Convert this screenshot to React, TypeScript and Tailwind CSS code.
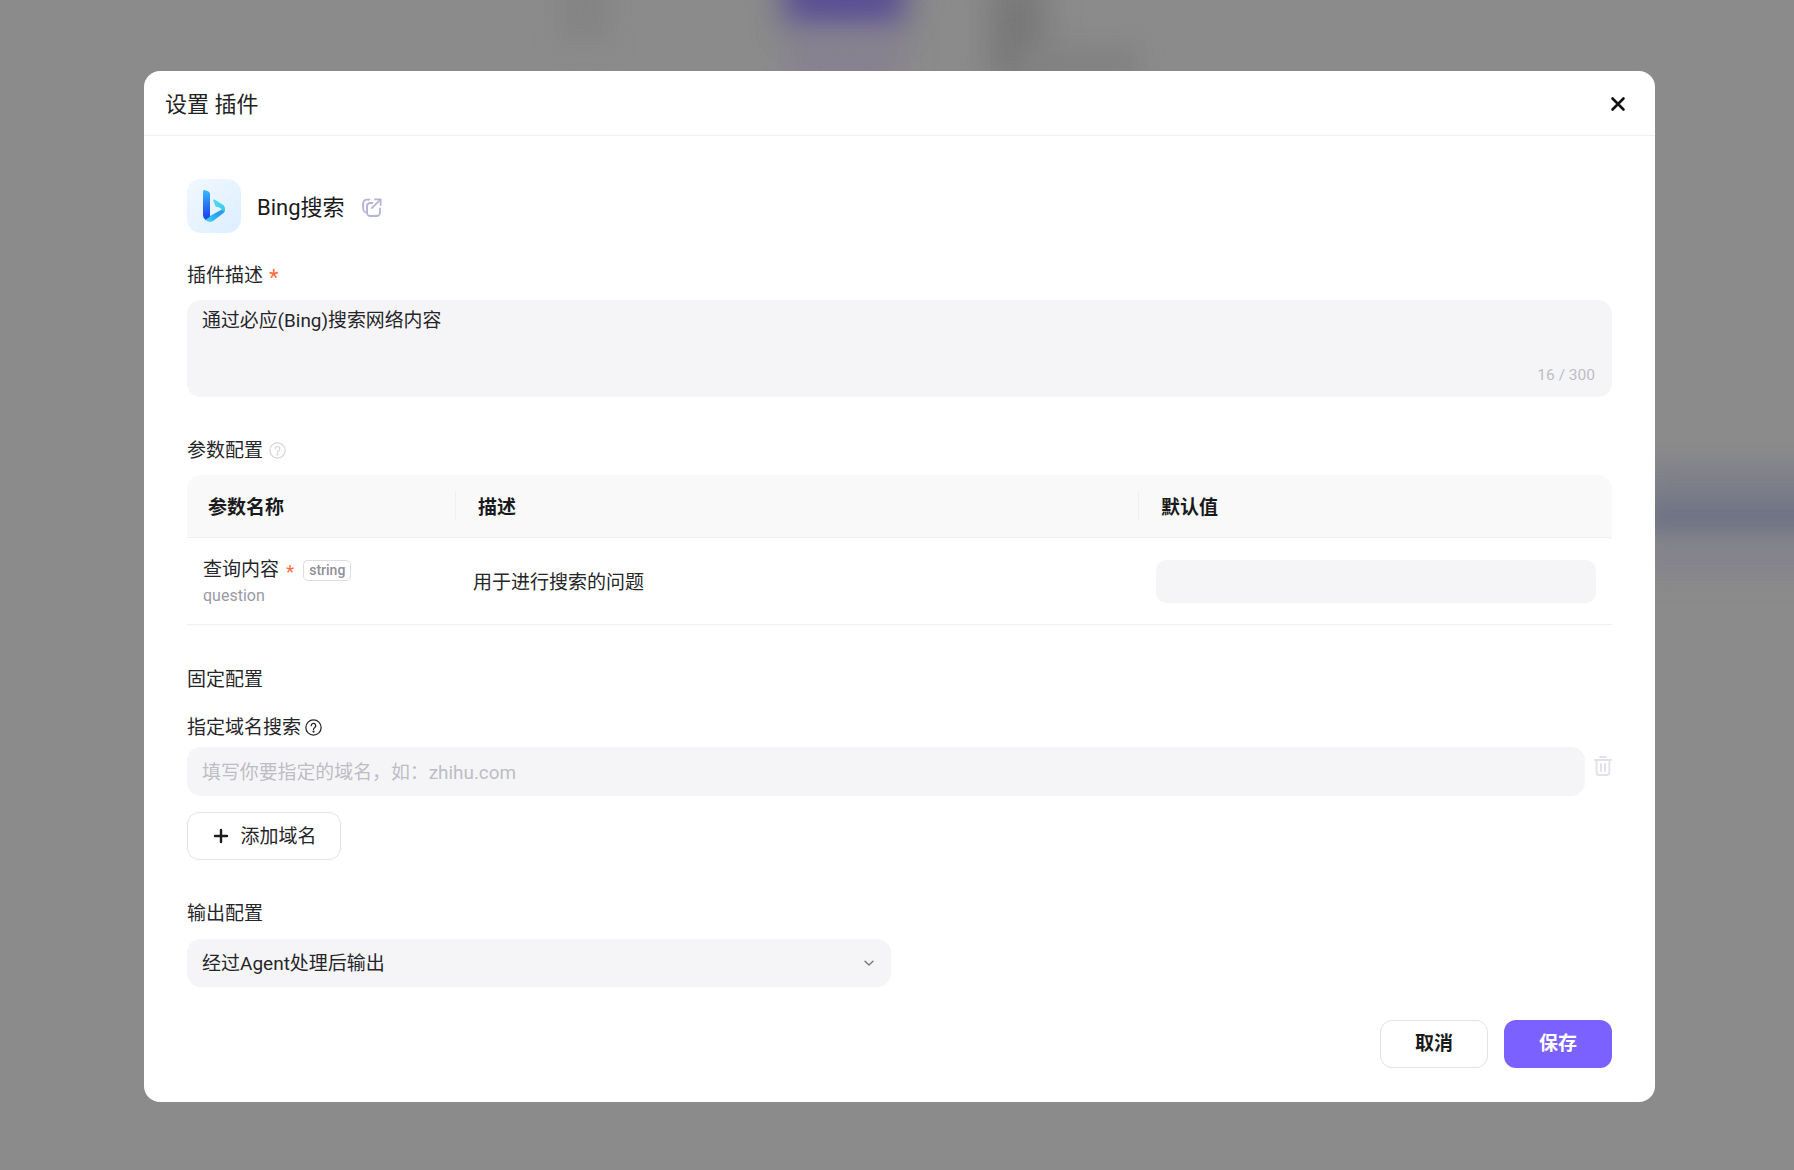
import React from "react";

const font = { fontFamily: '"Roboto", "Noto Sans CJK SC", sans-serif' };

function BingLogo() {
  return (
    <svg width="22" height="32" viewBox="0 0 22 32" fill="none">
      <defs>
        <linearGradient id="stem" x1="2" y1="0" x2="5" y2="27" gradientUnits="userSpaceOnUse">
          <stop offset="0" stopColor="#37bdff" />
          <stop offset="0.5" stopColor="#2b7cf0" />
          <stop offset="1" stopColor="#1b48ef" />
        </linearGradient>
        <linearGradient id="ribbon" x1="3" y1="31" x2="21" y2="17" gradientUnits="userSpaceOnUse">
          <stop offset="0" stopColor="#3fd6fb" />
          <stop offset="0.6" stopColor="#2a9bef" />
          <stop offset="1" stopColor="#2b9df5" />
        </linearGradient>
        <linearGradient id="wing" x1="11" y1="10" x2="21" y2="22" gradientUnits="userSpaceOnUse">
          <stop offset="0" stopColor="#52dcf2" />
          <stop offset="1" stopColor="#3ac6ec" />
        </linearGradient>
      </defs>
      <path d="M7 26 20.6 18.6C22.2 20 22.2 21.8 20.5 23L10.8 30.6C9.4 31.6 7.8 32 6.4 31.8 2.8 31.4 0 28.4 0 25L7 26Z" fill="url(#ribbon)" />
      <path d="M10.2 10.4 12.6 16.4 16.5 17.6 21 21.6C21.7 20.8 22 20 22 18.8 22 16.8 21 15.2 19.2 14.2L11.8 9.8C10.8 9.2 9.9 9.5 10.2 10.4Z" fill="url(#wing)" />
      <path d="M0 1.6C0 .4 1 -.3 2.2 .2L5 1.3C6.2 1.8 7 2.9 7 4.2V26.4L2.8 29.8C1.2 28.6 0 26.8 0 24.6V1.6Z" fill="url(#stem)" />
    </svg>
  );
}

function ExternalIcon() {
  return (
    <svg width="20" height="20" viewBox="0 0 20 20" fill="none" stroke="#b4b5d4" strokeWidth="1.8" strokeLinecap="round" strokeLinejoin="round">
      <path d="M7.6 1.6H5A3.8 3.8 0 0 0 1.2 5.4V8" />
      <path d="M5 14.8V8.4A3.4 3.4 0 0 1 8.4 5h2" />
      <path d="M5 6.4V14.6a3.4 3.4 0 0 0 3.4 3.4h6.2a3.4 3.4 0 0 0 3.4-3.4V10.4" />
      <path d="M1.2 5.4v5.4a3.8 3.8 0 0 0 3.8 3.8" />
      <path d="M9.8 10.2 18.4 1.6" />
      <path d="M13 1.4h5.6V7" />
    </svg>
  );
}

function HelpIcon({ color, size = 17 }: { color: string; size?: number }) {
  return (
    <svg className="mb-[2px]" width={size} height={size} viewBox="0 0 16 16" fill="none" stroke={color} strokeWidth="1.2" strokeLinecap="round">
      <circle cx="8" cy="8" r="7.2" />
      <path d="M5.9 6.3a2.1 2.1 0 1 1 3.3 1.7c-.7.5-1.2.9-1.2 1.8" />
      <circle cx="8" cy="11.8" r=".45" fill={color} />
    </svg>
  );
}

export default function App() {
  return (
    <div className="relative h-[1170px] w-full overflow-hidden bg-[#8b8b8b]" style={font}>
      <div className="absolute left-[560px] top-[-30px] h-[70px] w-[50px] bg-[#848484] blur-[12px]" />
      <div className="absolute left-[782px] top-[-40px] h-[72px] w-[125px] rounded-[30px] bg-[#5a4f94] blur-[16px]" />
      <div className="absolute left-[790px] top-[30px] h-[60px] w-[110px] bg-[#868190] blur-[16px]" />
      <div className="absolute left-[990px] top-[-20px] h-[100px] w-[55px] bg-[#787878] blur-[16px]" />
      <div className="absolute left-[1020px] top-[45px] h-[40px] w-[120px] bg-[#828282] blur-[12px]" />
      <div className="absolute left-[1640px] top-[465px] h-[35px] w-[200px] bg-[#7f808a] blur-[14px]" />
      <div className="absolute left-[1640px] top-[495px] h-[45px] w-[200px] bg-[#6e7385] blur-[14px]" />
      <div className="absolute left-[1640px] top-[540px] h-[35px] w-[200px] bg-[#84838c] blur-[12px]" />

      <div className="relative ml-[144px] mt-[71px] h-[1031px] w-[1511px] rounded-[16px] bg-white text-[#1c1c1e]">
        <div className="flex h-[65px] items-center justify-between border-b border-[#eeeff1] pl-[21px] pr-[27px]">
          <span className="pt-[4px] text-[22px] leading-[28px] text-[#222]">设置 插件</span>
          <svg className="mt-[1px]" width="20" height="20" viewBox="0 0 20 20" fill="none" stroke="#111" strokeWidth="2.6" strokeLinecap="round">
            <path d="M4.5 4.5 15.5 15.5M15.5 4.5 4.5 15.5" />
          </svg>
        </div>

        <div className="px-[43px] pt-[43px]">
          <div className="flex items-center">
            <div className="flex h-[54px] w-[54px] items-center justify-center rounded-[14px] bg-gradient-to-br from-[#f1f8fe] to-[#ddeeff]">
              <BingLogo />
            </div>
            <span className="ml-[16px] pt-[4px] text-[22px] leading-[28px] text-[#1a1a1c]">Bing搜索</span>
            <span className="ml-[17px] mt-[3px]"><ExternalIcon /></span>
          </div>

          <div className="mt-[29px] flex h-[28px] items-center gap-[6px] text-[19px] text-[#26262a]">
            <span>插件描述</span>
            <span className="pt-[3px] text-[22px] leading-[22px] text-[#ff6a3d]">*</span>
          </div>
          <div className="relative mt-[10px] h-[97px] rounded-[14px] bg-[#f5f5f7] pl-[15px] pr-[16px] pt-[7px] text-[18.9px] leading-[28px] text-[#26262a]">
            通过必应(Bing)搜索网络内容
            <span className="absolute bottom-[13px] right-[17px] text-[15.5px] leading-[18px] text-[#bdbdc5]">16 / 300</span>
          </div>

          <div className="mt-[40px] flex h-[28px] items-center gap-[6px] text-[19px] text-[#26262a]">
            <span>参数配置</span>
            <HelpIcon color="#d5d5da" />
          </div>

          <div className="mt-[10px] border-b border-[#eeeff1]">
            <div className="flex h-[63px] rounded-t-[14px] border-b border-[#eeeff1] bg-[#f9f9fa] text-[19px] font-bold text-[#1a1a1c]">
              <div className="flex w-[268px] items-center pl-[21px] pt-[4px]">参数名称</div>
              <div className="my-auto h-[30px] w-[1px] bg-[#eeeff1]" />
              <div className="flex w-[682px] items-center pl-[22px] pt-[4px]">描述</div>
              <div className="my-auto h-[30px] w-[1px] bg-[#eeeff1]" />
              <div className="flex flex-1 items-center pl-[22px] pt-[4px]">默认值</div>
            </div>
            <div className="flex h-[86px] items-center text-[19px] text-[#26262a]">
              <div className="w-[270px] pl-[16px]">
                <div className="flex h-[28px] items-center">
                  <span>查询内容</span>
                  <span className="ml-[7px] pt-[2px] text-[19px] leading-[19px] text-[#ff6a3d]">*</span>
                  <span className="ml-[9px] rounded-[5px] border border-[#dcdce2] px-[5px] text-[14px] font-medium leading-[19px] text-[#8f8f9a]">string</span>
                </div>
                <div className="mt-[1px] text-[16px] leading-[20px] text-[#9a9aa5]">question</div>
              </div>
              <div className="w-[682px] pl-[16px] pt-[4px]">用于进行搜索的问题</div>
              <div className="flex flex-1 pl-[17px] pr-[16px]">
                <div className="h-[43px] w-full rounded-[10px] bg-[#f5f5f7]" />
              </div>
            </div>
          </div>

          <div className="mt-[41px] h-[28px] text-[19px] leading-[28px] text-[#26262a]">固定配置</div>
          <div className="mt-[20px] flex h-[28px] items-center gap-[4px] text-[19px] text-[#26262a]">
            <span>指定域名搜索</span>
            <HelpIcon color="#26262a" />
          </div>

          <div className="mt-[5px] flex items-start">
            <div className="flex h-[49px] flex-1 items-center rounded-[14px] bg-[#f5f5f7] pl-[15px] pr-[16px] pt-[3px] text-[18.9px] text-[#bdbdc5]">
              填写你要指定的域名，如：zhihu.com
            </div>
            <svg className="ml-[9px] mt-[9px]" width="18" height="20" viewBox="0 0 18 20" fill="none" stroke="#e0e1ea" strokeWidth="1.9" strokeLinecap="round">
              <path d="M1 4h16M6 1h6" />
              <path d="M2.6 4v12.6A2.4 2.4 0 0 0 5 19h8a2.4 2.4 0 0 0 2.4-2.4V4" />
              <path d="M7 8v7M11 8v7" />
            </svg>
          </div>

          <div className="mt-[16px] flex h-[48px] w-[154px] items-center justify-center gap-[11px] rounded-[12px] border border-[#e2e2e6] pl-[2px] text-[19px] text-[#26262a]">
            <svg width="16" height="16" viewBox="0 0 16 16" fill="none" stroke="#1c1c1e" strokeWidth="2.4" strokeLinecap="round">
              <path d="M8 2v12M2 8h12" />
            </svg>
            <span className="pt-[2px]">添加域名</span>
          </div>

          <div className="mt-[40px] h-[28px] text-[19px] leading-[28px] text-[#26262a]">输出配置</div>
          <div className="mt-[11px] flex h-[48px] w-[704px] items-center justify-between rounded-[14px] bg-[#f5f5f7] pl-[15px] pr-[16px] text-[19px] text-[#26262a]">
            <span className="pt-[2px]">经过Agent处理后输出</span>
            <svg width="12" height="12" viewBox="0 0 12 12" fill="none" stroke="#77777f" strokeWidth="1.4" strokeLinecap="round" strokeLinejoin="round">
              <path d="M2 4.2 6 8l4-3.8" />
            </svg>
          </div>

          <div className="mt-[33px] flex justify-end gap-[16px] text-[19px] font-bold">
            <div className="flex h-[48px] w-[108px] items-center justify-center rounded-[12px] border border-[#e2e2e6] text-[#1a1a1c]">取消</div>
            <div className="flex h-[48px] w-[108px] items-center justify-center rounded-[12px] bg-[#7b61ff] text-white">保存</div>
          </div>
        </div>
      </div>
    </div>
  );
}
